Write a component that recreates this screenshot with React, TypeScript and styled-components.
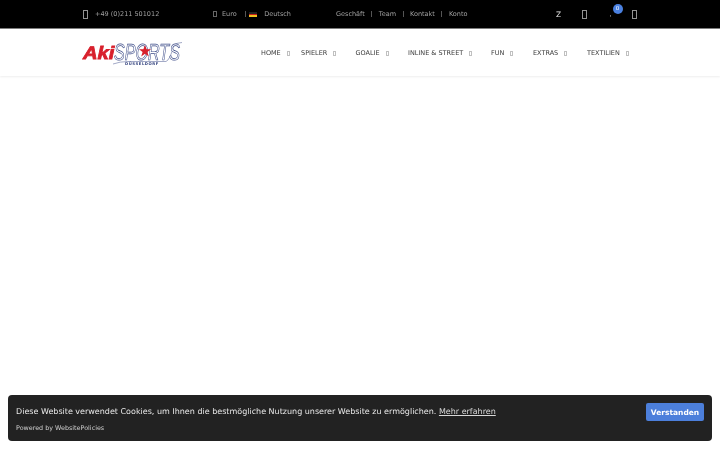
import React from 'react';
import styled, { createGlobalStyle } from 'styled-components';

const GlobalStyle = createGlobalStyle`
  html, body {
    margin: 0;
    padding: 0;
    height: 100%;
    background: #fff;
    font-family: "DejaVu Sans", sans-serif;
    text-rendering: geometricPrecision;
  }
  #root {
    height: 100%;
  }
`;

const Page = styled.div`
  height: 450px;
  display: flex;
  flex-direction: column;
  overflow: hidden;
  will-change: transform;
`;

const TopBar = styled.div`
  height: 28px;
  flex: none;
  background: #000;
  border-bottom: 1px solid #7d7d7d;
  display: flex;
  align-items: center;
  padding-left: 83px;
  color: #a0a0a0;
  font-size: 6.5px;
`;

const TopGroup = styled.div<{ $width: number }>`
  width: ${(p) => p.$width}px;
  flex: none;
  display: flex;
  align-items: center;
`;

const Tofu = styled.span<{ $w: number; $h: number; $color: string; $gap?: number }>`
  display: inline-block;
  flex: none;
  box-sizing: border-box;
  width: ${(p) => p.$w}px;
  height: ${(p) => p.$h}px;
  border: 1px solid ${(p) => p.$color};
  margin-right: ${(p) => p.$gap ?? 0}px;
`;

const MenuCaret = styled.span`
  flex: none;
  box-sizing: border-box;
  width: 3px;
  height: 5px;
  margin: 2px 0 0 6px;
  border: 1px solid #c0c0c0;
`;

const TopText = styled.span<{ $gap?: number }>`
  white-space: nowrap;
  margin-right: ${(p) => p.$gap ?? 0}px;
`;

const Pipe = styled.span`
  width: 1px;
  height: 6px;
  background: #555;
  flex: none;
`;

const Flag = styled.span`
  width: 8px;
  height: 5px;
  margin: 0 7px 0 3.5px;
  flex: none;
  background: linear-gradient(#222 0 33%, #c8201c 33% 66%, #f0c020 66%);
`;

const LinkList = styled.div`
  display: flex;
  align-items: center;
  gap: 6.5px;
  margin-top: -1px;
`;

const Tools = styled.div`
  display: flex;
  align-items: center;
  color: #e8e8e8;
`;

const ToolSlot = styled.span<{ $width: number }>`
  width: ${(p) => p.$width}px;
  flex: none;
  display: flex;
  align-items: center;
  font-size: 7.5px;
`;

const Cart = styled.span`
  position: relative;
  display: flex;
  align-items: center;
  font-size: 6px;
  color: #ccc;
`;

const CartBadge = styled.span`
  position: absolute;
  left: 3px;
  top: -7px;
  width: 10px;
  height: 10px;
  border-radius: 50%;
  background: #4a80e0;
  color: #fff;
  font-size: 5.5px;
  line-height: 10px;
  text-align: center;
`;

const NavBar = styled.div`
  height: 47px;
  flex: none;
  background: #fff;
  box-shadow: 0 1px 2px rgba(0, 0, 0, 0.07);
  display: flex;
  align-items: center;
  padding-left: 82px;
`;

const LogoSvg = styled.svg`
  width: 102px;
  height: 32px;
  flex: none;
  margin-right: 77px;
`;

const Menu = styled.nav`
  display: flex;
  align-items: center;
  color: #3a3a3a;
  font-size: 6.5px;
`;

const MenuItem = styled.a<{ $width: number }>`
  width: ${(p) => p.$width}px;
  flex: none;
  display: flex;
  align-items: center;
  white-space: nowrap;
`;

const Body = styled.main`
  flex: 1;
  position: relative;
`;

const CookieBanner = styled.div`
  position: absolute;
  left: 8px;
  right: 8px;
  bottom: 9px;
  height: 46px;
  box-sizing: border-box;
  padding: 8px 8px 0;
  display: flex;
  align-items: flex-start;
  justify-content: space-between;
  background: #222;
  border-radius: 4px;
  color: #e8e8e8;
`;

const CookieCopy = styled.div`
  display: flex;
  flex-direction: column;
  gap: 7px;
  margin-top: 3.5px;
`;

const CookieMessage = styled.div`
  font-size: 8px;
  line-height: 10px;
  white-space: nowrap;
`;

const MoreLink = styled.a`
  color: #d8d8d8;
  text-decoration: underline;
`;

const PoweredBy = styled.div`
  font-size: 6.4px;
  line-height: 8px;
  color: #cfcfcf;
`;

const AcceptButton = styled.button`
  width: 58px;
  height: 18px;
  padding: 0;
  border: 0;
  border-radius: 2px;
  background: #4c7fdb;
  color: #fff;
  font: bold 7.5px "DejaVu Sans", sans-serif;
  text-rendering: geometricPrecision;
`;

const menu = [
  { label: 'HOME', width: 40 },
  { label: 'SPIELER', width: 54.5 },
  { label: 'GOALIE', width: 52.5 },
  { label: 'INLINE & STREET', width: 83 },
  { label: 'FUN', width: 42 },
  { label: 'EXTRAS', width: 54 },
  { label: 'TEXTILIEN', width: 60 },
];

const links = ['Geschäft', 'Team', 'Kontakt', 'Konto'];

const Logo = () => (
  <LogoSvg viewBox="0 -4 102 32">
    <path d="M31 23 Q38 20.5 46 20.5 L84 20.5 Q88 19 92 4 Q94 2 100 1.5" fill="none" stroke="#46558f" strokeWidth="0.5" />
    <text
      transform="translate(32 19) scale(0.7 1)"
      fontFamily="Liberation Sans"
      fontStyle="italic"
      fontSize="23"
      fill="#fff"
      stroke="#3d4c88"
      strokeWidth="0.7"
    >
      SPORTS
    </text>
    <text
      transform="translate(1 17.5) scale(1.12 1)"
      fontFamily="Liberation Sans"
      fontWeight="bold"
      fontStyle="italic"
      fontSize="18"
      fill="#d8202c"
      stroke="#d8202c"
      strokeWidth="0.8"
    >
      Aki
    </text>
    <polygon points="63,4 64.6,8.2 69,8.2 65.4,11 66.8,15.4 63,12.8 59.2,15.4 60.6,11 57,8.2 61.4,8.2" fill="#d8202c" />
    <text x="43" y="23.6" fontFamily="DejaVu Sans" fontWeight="bold" fontSize="3.8" fill="#2f3f7c" letterSpacing="0.55">
      DÜSSELDORF
    </text>
  </LogoSvg>
);

export default function App() {
  return (
    <Page>
      <GlobalStyle />
      <TopBar>
        <TopGroup $width={130}>
          <Tofu $w={5} $h={9} $color="#929292" $gap={7} />
          <TopText>+49 (0)211 501012</TopText>
        </TopGroup>
        <TopGroup $width={123}>
          <Tofu $w={4} $h={6} $color="#666" $gap={5} />
          <TopText $gap={8}>Euro</TopText>
          <Pipe />
          <Flag />
          <TopText>Deutsch</TopText>
        </TopGroup>
        <TopGroup $width={220}>
          <LinkList>
            {links.map((link, i) => (
              <React.Fragment key={link}>
                {i > 0 && <Pipe />}
                <TopText>{link}</TopText>
              </React.Fragment>
            ))}
          </LinkList>
        </TopGroup>
        <Tools>
          <ToolSlot $width={26}>Z</ToolSlot>
          <ToolSlot $width={27.5}>
            <Tofu $w={5} $h={9} $color="#929292" />
          </ToolSlot>
          <ToolSlot $width={22}>
            <Cart>
              ,<CartBadge>0</CartBadge>
            </Cart>
          </ToolSlot>
          <ToolSlot $width={10}>
            <Tofu $w={5} $h={9} $color="#929292" />
          </ToolSlot>
        </Tools>
      </TopBar>
      <NavBar>
        <Logo />
        <Menu>
          {menu.map((item) => (
            <MenuItem key={item.label} $width={item.width}>
              {item.label}
              <MenuCaret />
            </MenuItem>
          ))}
        </Menu>
      </NavBar>
      <Body>
        <CookieBanner>
          <CookieCopy>
            <CookieMessage>
              Diese Website verwendet Cookies, um Ihnen die bestmögliche Nutzung unserer Website zu ermöglichen.{' '}
              <MoreLink>Mehr erfahren</MoreLink>
            </CookieMessage>
            <PoweredBy>Powered by WebsitePolicies</PoweredBy>
          </CookieCopy>
          <AcceptButton>Verstanden</AcceptButton>
        </CookieBanner>
      </Body>
    </Page>
  );
}
